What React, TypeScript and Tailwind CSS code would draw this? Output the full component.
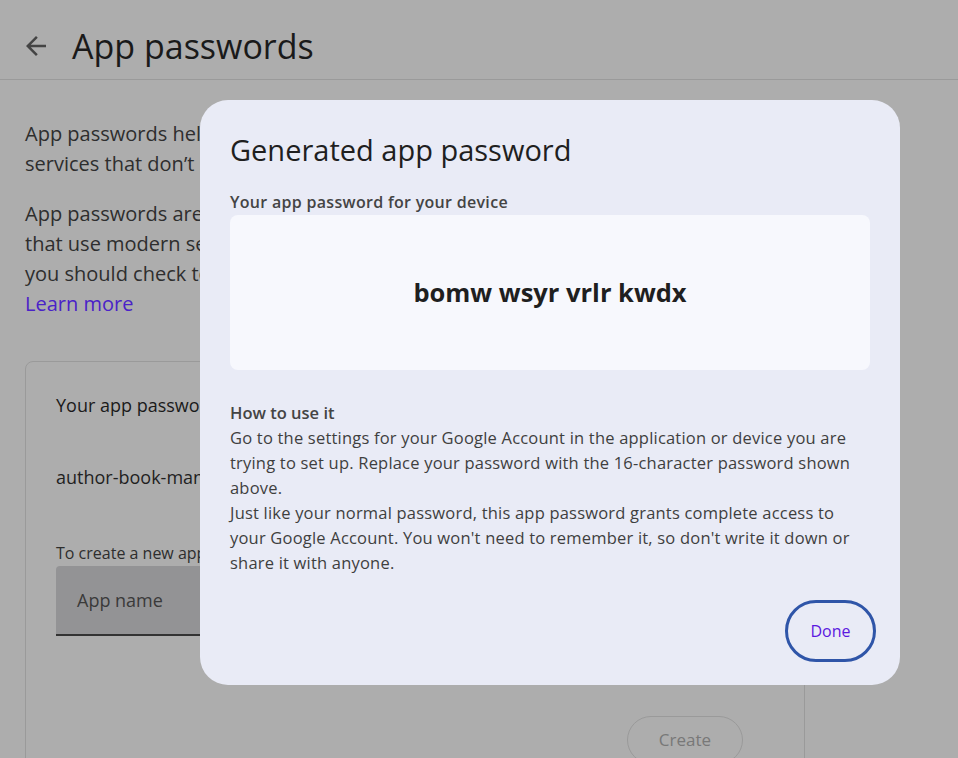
/**
 * App passwords — página de fundo com o diálogo "Generated app password" aberto.
 */

const sans = "font-['Open_Sans','Liberation_Sans',sans-serif]";

export default function App() {
  return (
    <div className={`relative min-h-[758px] w-full overflow-hidden bg-[#adadad] ${sans}`}>
      <PageBehind />
      <GeneratedDialog password="bomw wsyr vrlr kwdx" />
    </div>
  );
}

// ─── Página atrás do scrim ───────────────────────────────────────────────────

function PageBehind() {
  return (
    <div>
      <header className="flex h-[80px] items-center border-b border-[#9a9a9a] pt-[12px]">
        <button className="ml-[21px] flex h-[30px] w-[30px] items-center justify-center text-[#444]" aria-label="Back">
          <svg viewBox="0 0 24 24" className="h-[30px] w-[30px]" fill="currentColor">
            <path d="M20 11H7.83l5.59-5.59L12 4l-8 8 8 8 1.41-1.41L7.83 13H20v-2z" />
          </svg>
        </button>
        <h1 className="ml-[21px] text-[34px] leading-[40px] text-[#1a1a1a]">App passwords</h1>
      </header>

      <main className="w-[805px] pl-[25px] pt-[39px]">
        <p className="text-[20px] leading-[30px] text-[#2e2e2e]">
          App passwords help you sign in to your Google Account on older apps and
          <br />
          services that don’t support modern security standards.
        </p>
        <p className="mt-[20px] text-[20px] leading-[30px] text-[#2e2e2e]">
          App passwords are less secure than using up-to-date apps and services
          <br />
          that use modern security standards. Before you create an app password,
          <br />
          you should check to see if your app needs this in order to sign in.
          <a className="block text-[#4a22c8]" href="#">Learn more</a>
        </p>

        <section className="mt-[42px] h-[420px] rounded-[8px] border border-[#9a9a9a] px-[30px] pt-[31px]">
          <h2 className="text-[18px] font-medium leading-[24px] text-[#1a1a1a]">Your app passwords</h2>
          <p className="mt-[48px] text-[18px] leading-[24px] text-[#1f1f1f]">author-book-manager</p>
          <p className="mt-[54px] text-[16px] leading-[20px] text-[#2e2e2e]">
            To create a new app specific password, type a name for it below...
          </p>
          <div className="mt-[3px] flex h-[70px] items-center rounded-t-[4px] border-b-2 border-[#333] bg-[#939395] px-[21px]">
            <span className="text-[18px] text-[#3a3a3a]">App name</span>
          </div>
          <div className="mt-[80px] flex justify-end pr-[31px]">
            <button className="h-[48px] w-[116px] rounded-full border border-[#9a9a9a] text-[17px] text-[#787878]">
              Create
            </button>
          </div>
        </section>
      </main>
    </div>
  );
}

// ─── Diálogo ─────────────────────────────────────────────────────────────────

function GeneratedDialog({ password }: { password: string }) {
  return (
    <div
      role="dialog"
      className="absolute left-[200px] top-[100px] flex h-[585px] w-[700px] flex-col rounded-[28px] bg-[#e9ebf6] px-[30px] pt-[32px]"
    >
      <h2 className="text-[29px] leading-[36px] text-[#1f1f1f]">Generated app password</h2>

      <p className="mt-[24px] text-[16px] font-semibold leading-[20px] tracking-[0.3px] text-[#444]">
        Your app password for your device
      </p>
      <div className="mt-[3px] flex h-[155px] items-center justify-center rounded-[8px] bg-[#f7f8fd]">
        <span className="text-[25.5px] font-bold text-[#1f1f1f]">{password}</span>
      </div>

      <div className="mt-[30px] text-[16.5px] leading-[25px] tracking-[0.2px] text-[#3f3f3f]">
        <p className="font-semibold tracking-normal text-[#444]">How to use it</p>
        <p>
          Go to the settings for your Google Account in the application or device you are
          <br />
          trying to set up. Replace your password with the 16-character password shown
          <br />
          above.
        </p>
        <p>
          Just like your normal password, this app password grants complete access to
          <br />
          your Google Account. You won't need to remember it, so don't write it down or
          <br />
          share it with anyone.
        </p>
      </div>

      <div className="mt-[25px] -mr-[6px] flex justify-end">
        <button className="h-[62px] w-[91px] rounded-full border-[3px] border-[#2f55a8] text-[16px] font-medium tracking-normal text-[#5b18e0]">
          Done
        </button>
      </div>
    </div>
  );
}
